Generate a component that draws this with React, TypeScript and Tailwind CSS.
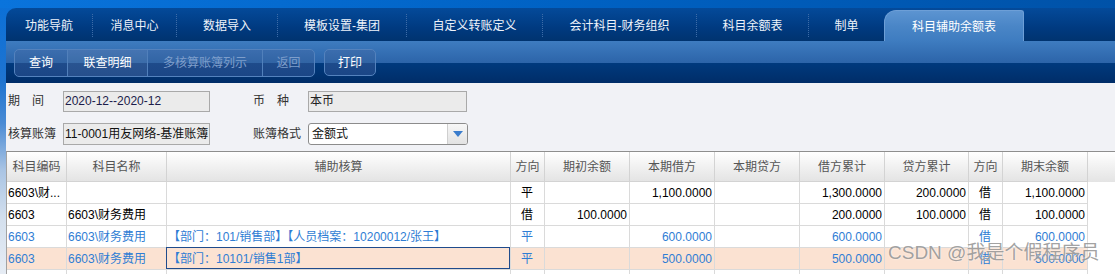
import React from "react";

const tabs: { label: string; w: string }[] = [
  { label: "功能导航", w: "w-[86px]" },
  { label: "消息中心", w: "w-[83px]" },
  { label: "数据导入", w: "w-[100px]" },
  { label: "模板设置-集团", w: "w-[128px]" },
  { label: "自定义转账定义", w: "w-[135px]" },
  { label: "会计科目-财务组织", w: "w-[153px]" },
  { label: "科目余额表", w: "w-[111px]" },
  { label: "制单", w: "w-[75px]" },
];

const headers = [
  "科目编码",
  "科目名称",
  "辅助核算",
  "方向",
  "期初余额",
  "本期借方",
  "本期贷方",
  "借方累计",
  "贷方累计",
  "方向",
  "期末余额",
];

const align = [
  "justify-start",
  "justify-start",
  "justify-start",
  "justify-center",
  "justify-end",
  "justify-end",
  "justify-end",
  "justify-end",
  "justify-end",
  "justify-center",
  "justify-end",
];

type Row = { cells: string[]; blue?: boolean; sel?: boolean };

const rows: Row[] = [
  {
    cells: ["6603\\财...", "", "", "平", "", "1,100.0000", "", "1,300.0000", "200.0000", "借", "1,100.0000"],
  },
  {
    cells: ["6603", "6603\\财务费用", "", "借", "100.0000", "", "", "200.0000", "100.0000", "借", "100.0000"],
  },
  {
    blue: true,
    cells: [
      "6603",
      "6603\\财务费用",
      "【部门：101/销售部】【人员档案：10200012/张王】",
      "平",
      "",
      "600.0000",
      "",
      "600.0000",
      "",
      "借",
      "600.0000",
    ],
  },
  {
    blue: true,
    sel: true,
    cells: ["6603", "6603\\财务费用", "【部门：10101/销售1部】", "平", "", "500.0000", "", "500.0000", "", "借", "500.0000"],
  },
  { cells: ["", "", "", "", "", "", "", "", "", "", ""] },
];

const grid =
  "grid grid-cols-[60px_100px_344px_34px_85px_85px_85px_85px_84px_34px_85px_1fr]";

function Sep() {
  return <div className="w-0 h-[23px] self-center border-l border-dotted border-[#3d6ca8] mt-[2px]" />;
}

export default function App() {
  return (
    <div className="relative w-[1115px] h-[274px] overflow-hidden flex flex-col bg-[linear-gradient(to_bottom,#0a70d8_0%,#1f74d0_30%,#4a8bd4_45%,#a9c4e4_62%,#d4e0ee_80%,#e6ecf4_100%)] font-['Liberation_Sans','Noto_Sans_CJK_SC',sans-serif] text-[12px]">
      {/* top strip */}
      <div className="h-[8px] shrink-0 bg-[linear-gradient(to_right,#0a74dc,#0062c4_50%,#0052a8)]" />
      <div className="flex flex-1 min-h-0">
        <div className="w-[6px] shrink-0" />
        <div className="flex-1 min-w-0 flex flex-col">
          {/* tab bar */}
          <div className="h-[33px] shrink-0 flex rounded-tl-[10px] bg-[linear-gradient(to_bottom,#044a9a,#003a80_60%,#00336f)] text-[#eef3fa]">
            {tabs.map((t, i) => (
              <React.Fragment key={t.label}>
                <div className={`${t.w} shrink-0 flex items-center justify-center pt-[3px] whitespace-nowrap`}>
                  {t.label}
                </div>
                {i < tabs.length - 1 && <Sep />}
              </React.Fragment>
            ))}
            <div className="w-[140px] shrink-0 h-[31px] mt-auto flex items-center justify-center pt-[1px] rounded-tl-[12px] rounded-tr-[3px] border border-b-0 border-[#6d9fd7] bg-[linear-gradient(to_bottom,#5c94d1,#4a86c7_50%,#3e7cc0)] text-white whitespace-nowrap">
              科目辅助余额表
            </div>
          </div>
          {/* toolbar */}
          <div className="h-[42px] shrink-0 flex items-start pt-[8px] pl-[8px] gap-[9px] bg-[linear-gradient(to_bottom,#3e7cc0_0%,#2c64a9_52%,#003a7e_52%,#002d68_100%)]">
            <div className="flex h-[28px] rounded-[5px] border border-[#5482bd] overflow-hidden bg-[linear-gradient(to_bottom,#3b6dae_0%,#3164a4_50%,#1e4b8b_50%,#1b4686_100%)]">
              <div className="w-[52px] flex items-center justify-center text-white">查询</div>
              <div className="w-[80px] flex items-center justify-center text-white border-l border-[#5180bb] bg-white/5">联查明细</div>
              <div className="w-[115px] flex items-center justify-center text-[#7e9ecb] border-l border-[#5180bb]">多核算账簿列示</div>
              <div className="w-[52px] flex items-center justify-center text-[#7e9ecb] border-l border-[#5180bb]">返回</div>
            </div>
            <div className="w-[52px] h-[27px] flex items-center justify-center rounded-[5px] border border-[#5482bd] text-white bg-[linear-gradient(to_bottom,#3b6dae_0%,#3164a4_52%,#1e4b8b_52%,#1b4686_100%)]">
              打印
            </div>
          </div>
          {/* form */}
          <div className="shrink-0 bg-[#f1f2f6] pt-[7px] pb-[6px] pl-[2px] flex flex-col gap-[11px] text-[#333]">
            <div className="flex items-center h-[22px]">
              <div className="w-[55px]">期　间</div>
              <div className="w-[147px] h-[21px] flex items-center pl-[1px] bg-[#ebebeb] border border-[#a9a9a9] text-[#1c1c4a] overflow-hidden whitespace-nowrap">
                2020-12--2020-12
              </div>
              <div className="w-[43px]" />
              <div className="w-[55px]">币　种</div>
              <div className="w-[159px] h-[21px] flex items-center pl-[1px] bg-[#ebebeb] border border-[#a9a9a9] text-[#222] overflow-hidden whitespace-nowrap">
                本币
              </div>
            </div>
            <div className="flex items-center h-[22px]">
              <div className="w-[55px] whitespace-nowrap">核算账簿</div>
              <div className="w-[147px] h-[22px] flex items-center pl-[1px] bg-[#ebebeb] border border-[#a9a9a9] text-[#111] overflow-hidden whitespace-nowrap">
                11-0001用友网络-基准账簿
              </div>
              <div className="w-[43px]" />
              <div className="w-[55px] whitespace-nowrap">账簿格式</div>
              <div className="w-[160px] h-[22px] flex bg-white border border-[#8c8c8c] rounded-[3px] overflow-hidden">
                <div className="flex-1 flex items-center pl-[3px] text-[#111]">金额式</div>
                <div className="w-[20px] flex items-center justify-center border-l border-[#cfcfcf] bg-[linear-gradient(to_bottom,#f7f7f7,#e2e2e2)]">
                  <svg width="10" height="6" viewBox="0 0 10 6">
                    <path d="M0 0 H10 L5 6 Z" fill="#3a7ccc" />
                  </svg>
                </div>
              </div>
            </div>
          </div>
          {/* table */}
          <div className="flex-1 bg-white border-t border-l border-t-[#8e8e8e] border-l-[#a2a2a2]">
            <div className={`${grid} h-[30px]`}>
              {headers.map((h, i) => (
                <div
                  key={i}
                  className="flex items-center justify-center text-[#555] border-r border-b border-[#d3d3d3] bg-[linear-gradient(to_bottom,#ffffff,#f1f1f1_50%,#e4e4e4)] whitespace-nowrap"
                >
                  {h}
                </div>
              ))}
              <div className="bg-[linear-gradient(to_bottom,#ffffff,#f1f1f1_50%,#e4e4e4)]" />
            </div>
            {rows.map((r, ri) => (
              <div key={ri} className={`${grid} h-[22px]`}>
                {r.cells.map((c, ci) => (
                  <div
                    key={ci}
                    className={`relative flex items-center ${align[ci]} px-[1px] pr-[2px] border-r border-b border-[#dadada] whitespace-nowrap overflow-visible ${
                      r.sel ? "bg-[#fbe2d2]" : "bg-white"
                    } ${r.blue ? "text-[#2f7dd4]" : "text-black"}`}
                  >
                    {r.sel && ci === 2 && (
                      <div className="absolute -left-px -top-px right-0 bottom-0 border border-[#1f4b8c]" />
                    )}
                    <span className="relative">{c}</span>
                  </div>
                ))}
                <div className="bg-white" />
              </div>
            ))}
          </div>
        </div>
      </div>
      {/* watermark */}
      <div className="absolute left-[888px] top-[241px] text-[19px] leading-[24px] text-[#8a8a8a]/80 whitespace-nowrap [text-shadow:0_0_2px_rgba(255,255,255,0.9)]">
        CSDN @我是个假程序员
      </div>
    </div>
  );
}
